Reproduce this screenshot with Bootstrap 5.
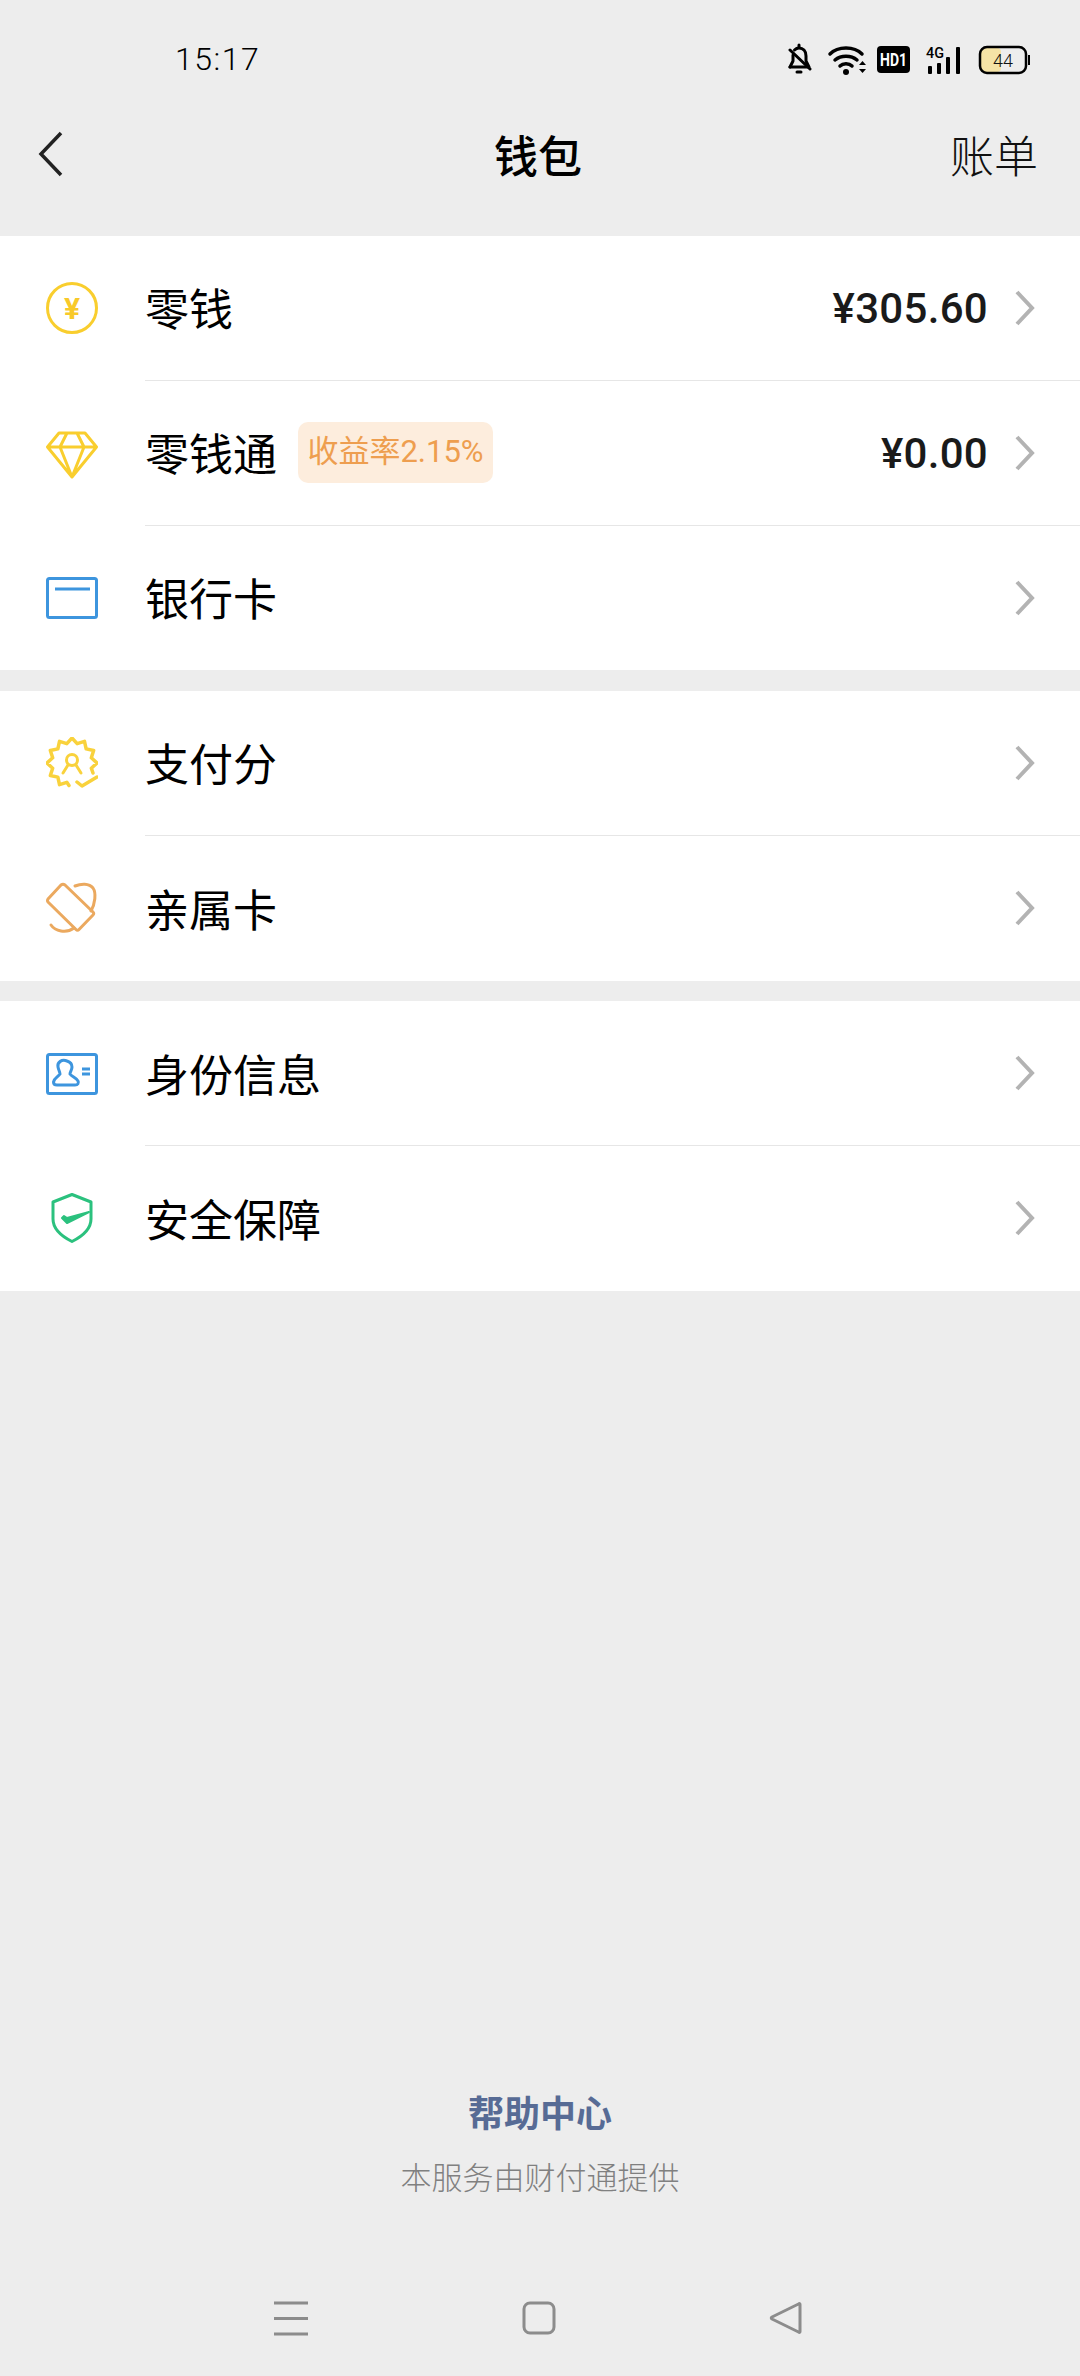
<!DOCTYPE html>
<html lang="zh-CN">
<head>
  <meta charset="UTF-8">
  <meta name="viewport" content="width=device-width, initial-scale=1.0">
  <title>钱包</title>
  <link rel="stylesheet" href="https://cdn.jsdelivr.net/npm/bootstrap@5.3.0/dist/css/bootstrap.min.css" />
  <style>
    body { background-color: #ededed; font-family: Roboto, "Noto Sans CJK SC", sans-serif; color: #000; }
    .screen { width: 1080px; height: 2376px; }
    .status-bar { height: 118px; padding-left: 175px; padding-right: 50px; }
    .clock { font-size: 32px; font-weight: 300; letter-spacing: 1.5px; color: #000; }
    .top-bar { height: 76px; margin-bottom: 42px; padding-left: 38px; padding-right: 42px; padding-bottom: 4px; }
    .top-side { flex: 1 1 0; }
    .top-title { font-family: "Noto Sans CJK SC", sans-serif; font-size: 44px; font-weight: 500; }
    .top-action { font-family: "Noto Sans CJK SC", sans-serif; font-size: 44px; font-weight: 300; color: #111; }
    .wallet-group { margin-bottom: 20.6px; border-radius: 0; }
    .wallet-row { height: 144.8px; padding: 0; border: 0; color: #000; }
    .wallet-icon { width: 145px; padding-left: 46px; flex: none; }
    .wallet-body { padding-right: 45px; border-bottom: 1px solid #e6e6e6; }
    .wallet-row:last-child .wallet-body { border-bottom: 0; }
    .wallet-name { font-family: "Noto Sans CJK SC", sans-serif; font-size: 44px; font-weight: 400; padding-bottom: 1px; }
    .rate-tag { margin-left: 21px; height: 61px; width: 195px; background: #fdeddd; color: #ee9e4f; border-radius: 10px; font-size: 31px; font-family: Roboto, "Noto Sans CJK SC", sans-serif; }
    .amount { font-size: 42px; font-weight: 500; letter-spacing: .3px; color: #1a1a1a; margin-right: 27px; padding-top: 1px; }
    .gem-shift { margin-top: 4px; }
    .help-title { font-family: "Noto Sans CJK SC", sans-serif; font-size: 36px; font-weight: 700; color: #576b95; line-height: 44px; }
    .help-note { font-family: "Noto Sans CJK SC", sans-serif; font-size: 31px; font-weight: 300; color: #808080; line-height: 44px; margin-top: 21px; }
    .nav-keys { height: 96px; margin-top: 82px; padding-left: 274px; padding-right: 277px; padding-bottom: 20px; }
    svg { display: block; }
    svg text { font-family: Roboto, "Noto Sans CJK SC", sans-serif; }
  </style>
</head>
<body>
  <div class="screen d-flex flex-column">

    <!-- status bar -->
    <div class="status-bar d-flex align-items-center justify-content-between">
      <span class="clock">15:17</span>
      <svg width="242" height="32" viewBox="0 0 242 32">
        <!-- bell -->
        <g fill="none" stroke="#000" stroke-width="3" stroke-linecap="round" stroke-linejoin="round">
          <path d="M2 24H21L18 18V13C18 8 15 5 11 5C9 5 7.500 6 6.500 7"/>
          <path d="M5 12V18L2 24"/>
          <path d="M2 7L22 26"/>
          <path d="M11 2V4M9 29H13"/>
        </g>
        <!-- wifi -->
        <g fill="none" stroke="#000" stroke-width="3.500" stroke-linecap="round">
          <path d="M42 11C50 3 66 3 74 11"/>
          <path d="M47 17C53 12 63 12 69 17"/>
          <path d="M52 23C55 20 61 20 64 23"/>
        </g>
        <circle cx="58" cy="29" r="3" fill="#000"/>
        <path d="M71 22L74.500 18L78 22ZM71 26L74.500 30L78 26Z" fill="#000"/>
        <!-- hd -->
        <rect x="89" y="3" width="33" height="27" rx="4" fill="#000"/>
        <text x="105.500" y="23" fill="#fff" font-size="19" font-weight="700" text-anchor="middle" textLength="27" lengthAdjust="spacingAndGlyphs">HD1</text>
        <!-- signal -->
        <text x="138" y="15" fill="#000" font-size="15" font-weight="500" textLength="18" lengthAdjust="spacingAndGlyphs">4G</text>
        <rect x="140" y="23" width="4" height="8" rx="1" fill="#000"/>
        <rect x="149" y="20" width="4" height="11" rx="1" fill="#000"/>
        <rect x="158" y="14" width="4" height="17" rx="1" fill="#000"/>
        <rect x="168" y="4" width="4" height="27" rx="1" fill="#000"/>
        <!-- battery -->
        <rect x="192" y="5" width="21" height="24" rx="4" fill="#f5e3a6"/>
        <rect x="192" y="4" width="46" height="26" rx="7" fill="none" stroke="#000" stroke-width="2.500"/>
        <rect x="240" y="12" width="2" height="10" fill="#000"/>
        <text x="215" y="24" fill="#111" font-size="18" font-weight="300" text-anchor="middle">44</text>
      </svg>
    </div>

    <!-- title bar -->
    <div class="top-bar d-flex align-items-center">
      <div class="top-side">
        <svg width="26" height="46" viewBox="0 0 26 46"><path d="M23 2L3 23L23 44" fill="none" stroke="#222" stroke-width="3.500"/></svg>
      </div>
      <div class="top-title">钱包</div>
      <div class="top-side text-end top-action">账单</div>
    </div>

    <!-- group 1 -->
    <div class="list-group wallet-group">
      <div class="list-group-item wallet-row d-flex">
        <div class="wallet-icon d-flex align-items-center">
          <svg width="52" height="52" viewBox="0 0 52 52">
            <circle cx="26" cy="26" r="24.500" fill="none" stroke="#f9ce2e" stroke-width="3"/>
            <text x="26" y="37" fill="#f8c92a" font-size="30" font-weight="700" text-anchor="middle">¥</text>
          </svg>
        </div>
        <div class="wallet-body flex-grow-1 d-flex align-items-center">
          <span class="wallet-name">零钱</span>
          <span class="amount ms-auto">¥305.60</span>
          <svg width="20" height="36" viewBox="0 0 20 36"><path d="M2 2L17 18L2 34" fill="none" stroke="#b3b3b3" stroke-width="4"/></svg>
        </div>
      </div>
      <div class="list-group-item wallet-row d-flex">
        <div class="wallet-icon d-flex align-items-center">
          <svg class="gem-shift" width="52" height="48" viewBox="0 0 52 48">
            <path d="M13 2H39L50.500 16L26 46L1.500 16ZM1.500 16H50.500M26 46L14 16L21 2M26 46L38 16L31 2" fill="none" stroke="#f9ce2e" stroke-width="3" stroke-linejoin="round"/>
          </svg>
        </div>
        <div class="wallet-body flex-grow-1 d-flex align-items-center">
          <span class="wallet-name">零钱通</span>
          <span class="rate-tag d-flex align-items-center justify-content-center">收益率2.15%</span>
          <span class="amount ms-auto">¥0.00</span>
          <svg width="20" height="36" viewBox="0 0 20 36"><path d="M2 2L17 18L2 34" fill="none" stroke="#b3b3b3" stroke-width="4"/></svg>
        </div>
      </div>
      <div class="list-group-item wallet-row d-flex">
        <div class="wallet-icon d-flex align-items-center">
          <svg width="52" height="42" viewBox="0 0 52 42">
            <rect x="1.500" y="1.500" width="49" height="39" rx="2" fill="none" stroke="#3d95de" stroke-width="3"/>
            <path d="M9 12H44" stroke="#3d95de" stroke-width="3"/>
          </svg>
        </div>
        <div class="wallet-body flex-grow-1 d-flex align-items-center">
          <span class="wallet-name">银行卡</span>
          <svg class="ms-auto" width="20" height="36" viewBox="0 0 20 36"><path d="M2 2L17 18L2 34" fill="none" stroke="#b3b3b3" stroke-width="4"/></svg>
        </div>
      </div>
    </div>

    <!-- group 2 -->
    <div class="list-group wallet-group">
      <div class="list-group-item wallet-row d-flex">
        <div class="wallet-icon d-flex align-items-center">
          <svg width="52" height="52" viewBox="-26 -26 52 52">
            <g fill="none" stroke="#f9d23c" stroke-width="3.500" stroke-linejoin="round" stroke-linecap="round">
              <path d="M-3 22.500L-5.180 19.320L-12.500 21.650L-14.140 14.140L-21.650 12.500L-19.320 5.180L-25 0L-19.320 -5.180L-21.650 -12.500L-14.140 -14.140L-12.500 -21.650L-5.180 -19.320L0 -25L5.180 -19.320L12.500 -21.650L14.140 -14.140L21.650 -12.500L19.320 -5.180L25 0L19.320 5.180L21 10"/>
              <circle cx="0" cy="-3" r="5.500" stroke-width="3"/>
              <path d="M-4 2L-9 10M4 2L9 10" stroke-width="3"/>
              <path d="M5 19L10 23L25 14"/>
            </g>
          </svg>
        </div>
        <div class="wallet-body flex-grow-1 d-flex align-items-center">
          <span class="wallet-name">支付分</span>
          <svg class="ms-auto" width="20" height="36" viewBox="0 0 20 36"><path d="M2 2L17 18L2 34" fill="none" stroke="#b3b3b3" stroke-width="4"/></svg>
        </div>
      </div>
      <div class="list-group-item wallet-row d-flex">
        <div class="wallet-icon d-flex align-items-center">
          <svg width="52" height="52" viewBox="0 0 52 52">
            <g fill="none" stroke="#eba95f" stroke-width="3" stroke-linejoin="round" stroke-linecap="round">
              <path d="M15 3Q17 1.500 19 3L47 30Q48.500 31.500 47 33L33 47.500Q31.500 49 30 47.500L2 20Q1 18.500 2 17Z"/>
              <path d="M29 4C35 1.500 43 1 47 6C50.500 11 49 22 45 29"/>
              <path d="M5 43C9 49 20 52 28 46"/>
            </g>
          </svg>
        </div>
        <div class="wallet-body flex-grow-1 d-flex align-items-center">
          <span class="wallet-name">亲属卡</span>
          <svg class="ms-auto" width="20" height="36" viewBox="0 0 20 36"><path d="M2 2L17 18L2 34" fill="none" stroke="#b3b3b3" stroke-width="4"/></svg>
        </div>
      </div>
    </div>

    <!-- group 3 -->
    <div class="list-group wallet-group">
      <div class="list-group-item wallet-row d-flex">
        <div class="wallet-icon d-flex align-items-center">
          <svg width="52" height="42" viewBox="0 0 52 42">
            <g fill="none" stroke="#3d95de" stroke-width="3">
              <rect x="1.500" y="1.500" width="49" height="39" rx="2"/>
              <path d="M21 8C16 6 11 9 12 14C12.500 17 14 19 14 21C12 24 8 25 7.500 29C7.500 31 9 32 11 32H29C32 32 33 30 32 28C31 25 26 24 24 21C24 19 26 17 26 14C26 11 24 9 21 8Z"/>
              <path d="M36 16H44M36 21H44"/>
            </g>
          </svg>
        </div>
        <div class="wallet-body flex-grow-1 d-flex align-items-center">
          <span class="wallet-name">身份信息</span>
          <svg class="ms-auto" width="20" height="36" viewBox="0 0 20 36"><path d="M2 2L17 18L2 34" fill="none" stroke="#b3b3b3" stroke-width="4"/></svg>
        </div>
      </div>
      <div class="list-group-item wallet-row d-flex">
        <div class="wallet-icon d-flex align-items-center">
          <svg width="52" height="50" viewBox="0 0 52 50">
            <path d="M26 1.500L45 9V26C45 37 35 44 26 48.500C17 44 7 37 7 26V9Z" fill="none" stroke="#2bc17e" stroke-width="3" stroke-linejoin="round"/>
            <path d="M16 25L21 30L43 19L21 25L18 23Z" fill="#2bc17e" stroke="#2bc17e" stroke-width="2" stroke-linejoin="round"/>
          </svg>
        </div>
        <div class="wallet-body flex-grow-1 d-flex align-items-center">
          <span class="wallet-name">安全保障</span>
          <svg class="ms-auto" width="20" height="36" viewBox="0 0 20 36"><path d="M2 2L17 18L2 34" fill="none" stroke="#b3b3b3" stroke-width="4"/></svg>
        </div>
      </div>
    </div>

    <!-- footer -->
    <div class="mt-auto text-center">
      <div class="help-title">帮助中心</div>
      <div class="help-note">本服务由财付通提供</div>
    </div>

    <!-- android keys -->
    <div class="nav-keys d-flex align-items-center justify-content-between">
      <svg width="34" height="35" viewBox="0 0 34 35"><path d="M0 2H34M0 17.500H34M0 33H34" stroke="#8c8c8c" stroke-width="3"/></svg>
      <svg width="34" height="34" viewBox="0 0 34 34"><rect x="2" y="2" width="30" height="30" rx="6" fill="none" stroke="#8c8c8c" stroke-width="3"/></svg>
      <svg width="34" height="34" viewBox="0 0 34 34"><path d="M31 3.500V30.500Q31 32 29.500 31L3 18Q1.500 17 3 16L29.500 3Q31 2 31 3.500Z" fill="none" stroke="#8c8c8c" stroke-width="3" stroke-linejoin="round"/></svg>
    </div>
  </div>

  <script src="https://cdn.jsdelivr.net/npm/bootstrap@5.3.0/dist/js/bootstrap.bundle.min.js"></script>
</body>
</html>
